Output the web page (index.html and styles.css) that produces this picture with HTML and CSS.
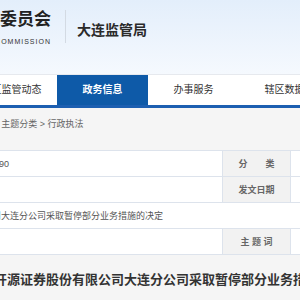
FILE: index.html
```html
<!DOCTYPE html>
<html lang="zh-CN">
<head>
    <meta charset="UTF-8">
    <meta name="viewport" content="width=device-width, initial-scale=1.0">
    <title>大连监管局</title>
    <link rel="stylesheet" href="styles.css">
</head>
<body>
    <div class="header">
        <div class="logo">
            <p class="logo-cn">中国证券监督管理委员会</p>
            <p class="logo-en">China Securities Regulatory Commission</p>
        </div>
        <div class="divider"></div>
        <p class="site-name">大连监管局</p>
    </div>

    <div class="nav">
        <ul>
            <li>辖区监管动态</li>
            <li class="active">政务信息</li>
            <li>办事服务</li>
            <li>辖区数据</li>
        </ul>
    </div>

    <div class="main">
        <p class="crumb">政务信息 &gt; 主题分类 &gt; 行政执法</p>

        <table class="info-table">
            <tr>
                <td class="label">索 引 号</td>
                <td class="value">bm56000001/2021-0090</td>
                <td class="label">分　　类</td>
                <td class="value wide">行政执法</td>
            </tr>
            <tr>
                <td class="label">发布机构</td>
                <td class="value">大连监管局</td>
                <td class="label">发文日期</td>
                <td class="value wide">2021年</td>
            </tr>
            <tr>
                <td class="label">名　　称</td>
                <td class="value" colspan="3">开源证券股份有限公司大连分公司采取暂停部分业务措施的决定</td>
            </tr>
            <tr>
                <td class="label">文　　号</td>
                <td class="value">〔2021〕</td>
                <td class="label">主 题 词</td>
                <td class="value wide"></td>
            </tr>
        </table>

        <h2 class="doc-title">开源证券股份有限公司大连分公司采取暂停部分业务措施的决定</h2>
    </div>
</body>
</html>
```

FILE: styles.css
```css
*{
    margin: 0;
    padding: 0;
    box-sizing: border-box;
}

body{
    width: 300px;
    height: 300px;
    overflow: hidden;
    background-color: #f5f5f5;
    font-family: "Liberation Sans", "Noto Sans CJK SC", sans-serif;
    color: #333;
}

/* header */
.header{
    height: 74px;
    display: flex;
    align-items: flex-start;
    padding-top: 10px;
    background: linear-gradient(#e3eefb, #f5f9fe);
    white-space: nowrap;
}
.logo{
    flex: none;
    display: flex;
    flex-direction: column;
    align-items: flex-end;
    margin-left: -149px;
    width: 200px;
}
.logo-cn{
    font-size: 17px;
    line-height: 20px;
    font-weight: bold;
    color: #222;
}
.logo-en{
    margin-top: 7px;
    font-size: 7px;
    line-height: 10px;
    letter-spacing: 1px;
    text-transform: uppercase;
    color: #333;
}
.divider{
    flex: none;
    width: 1px;
    height: 33px;
    margin-left: 14px;
    background-color: #d3dae3;
}
.site-name{
    margin-left: 11px;
    margin-top: 12px;
    font-size: 14px;
    line-height: 16px;
    font-weight: bold;
    color: #2a2a2a;
}

/* nav */
.nav{
    background-color: #fff;
    border-top: 1px solid #e6e9ee;
    border-bottom: 3px solid #1c5fb1;
    white-space: nowrap;
}
.nav ul{
    list-style: none;
    display: flex;
    margin-left: -34px;
}
.nav li{
    flex: none;
    width: 91px;
    height: 30px;
    line-height: 30px;
    text-align: center;
    font-size: 10px;
    color: #333;
}
.nav li.active{
    background-color: #0e5aa8;
    color: #fff;
    font-weight: bold;
}

/* content */
.crumb{
    padding-top: 10px;
    height: 42px;
    font-size: 9px;
    line-height: 12px;
    color: #666;
    white-space: nowrap;
    margin-left: -45px;
}

.info-table{
    margin-left: -200px;
    border-collapse: collapse;
    table-layout: fixed;
    width: 690px;
    background-color: #fff;
    font-size: 9px;
    color: #555;
}
.info-table td{
    height: 26px;
    border: 1px solid #dde3ec;
    white-space: nowrap;
    overflow: hidden;
}
.info-table td.label{
    width: 68px;
    background-color: #f2f2f2;
    text-align: center;
    font-weight: bold;
    color: #666;
}
.info-table tr td:first-child{
    width: 100px;
}
.info-table td.value{
    width: 322px;
    padding-left: 10px;
}
.info-table td.wide{
    width: 200px;
}

.doc-title{
    margin-top: 16px;
    margin-left: -6px;
    font-size: 13px;
    line-height: 18px;
    font-weight: bold;
    color: #333;
    white-space: nowrap;
}
```
